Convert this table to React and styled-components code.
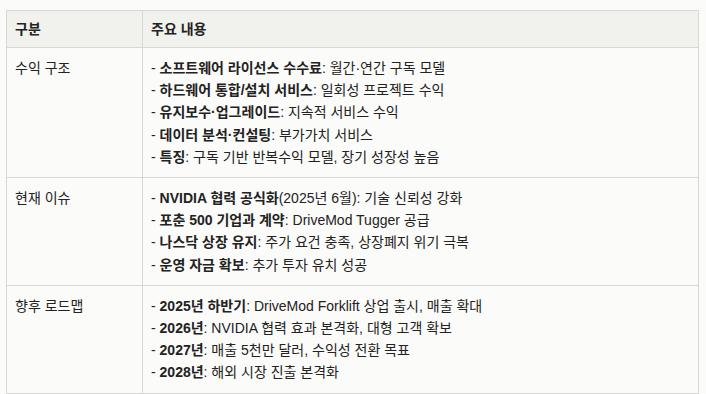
import React from "react";
import styled, { createGlobalStyle } from "styled-components";

const GlobalStyle = createGlobalStyle`
  body {
    margin: 0;
    background: #fbfbf9;
    font-family: "Liberation Sans", "Noto Sans CJK KR", sans-serif;
    color: #222;
  }
`;

const Page = styled.div`
  padding: 10px 7px 0 6px;
`;

const Table = styled.table`
  width: 100%;
  border-collapse: collapse;
  font-size: 14px;
  line-height: 22.2px;
`;

const HeadCell = styled.th`
  background: #f1f1ed;
  border: 1px solid #d8d8d2;
  text-align: left;
  font-weight: 700;
  height: 37px;
  padding: 0 8px;
  width: ${(p) => p.$width || "auto"};
  box-sizing: border-box;
`;

const Cell = styled.td`
  border: 1px solid #d8d8d2;
  vertical-align: top;
  padding: 9px 8px 9px 8px;
`;

const Line = styled.div`
  white-space: nowrap;
`;

const Key = styled.strong`
  font-weight: 700;
`;

const rows = [
  {
    label: "수익 구조",
    items: [
      ["소프트웨어 라이선스 수수료", ": 월간·연간 구독 모델"],
      ["하드웨어 통합/설치 서비스", ": 일회성 프로젝트 수익"],
      ["유지보수·업그레이드", ": 지속적 서비스 수익"],
      ["데이터 분석·컨설팅", ": 부가가치 서비스"],
      ["특징", ": 구독 기반 반복수익 모델, 장기 성장성 높음"],
    ],
  },
  {
    label: "현재 이슈",
    items: [
      ["NVIDIA 협력 공식화", "(2025년 6월): 기술 신뢰성 강화"],
      ["포춘 500 기업과 계약", ": DriveMod Tugger 공급"],
      ["나스닥 상장 유지", ": 주가 요건 충족, 상장폐지 위기 극복"],
      ["운영 자금 확보", ": 추가 투자 유치 성공"],
    ],
  },
  {
    label: "향후 로드맵",
    items: [
      ["2025년 하반기", ": DriveMod Forklift 상업 출시, 매출 확대"],
      ["2026년", ": NVIDIA 협력 효과 본격화, 대형 고객 확보"],
      ["2027년", ": 매출 5천만 달러, 수익성 전환 목표"],
      ["2028년", ": 해외 시장 진출 본격화"],
    ],
  },
];

export default function App() {
  return (
    <>
      <GlobalStyle />
      <Page>
        <Table>
          <thead>
            <tr>
              <HeadCell $width="136px">구분</HeadCell>
              <HeadCell>주요 내용</HeadCell>
            </tr>
          </thead>
          <tbody>
            {rows.map((row) => (
              <tr key={row.label}>
                <Cell>{row.label}</Cell>
                <Cell>
                  {row.items.map(([k, rest]) => (
                    <Line key={k}>
                      - <Key>{k}</Key>
                      {rest}
                    </Line>
                  ))}
                </Cell>
              </tr>
            ))}
          </tbody>
        </Table>
      </Page>
    </>
  );
}
